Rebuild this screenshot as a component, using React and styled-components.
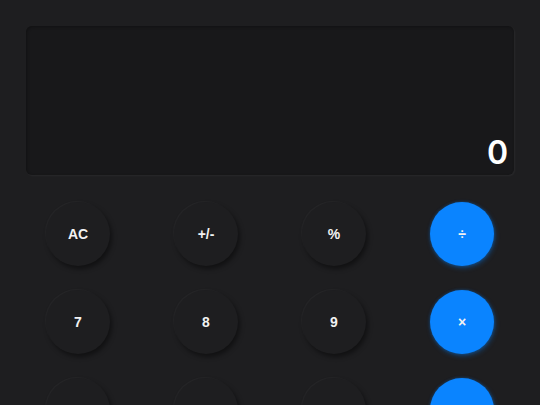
import React from "react";
import styled, { createGlobalStyle } from "styled-components";

const Global = createGlobalStyle`
  html, body { margin: 0; padding: 0; background: #1e1e20; overflow: hidden; }
  body { font-family: "Liberation Sans", Arial, sans-serif; }
`;

const Calculator = styled.div`
  padding: 26px 26px 0 26px;
  display: flex;
  flex-direction: column;
  gap: 27px;
  width: 488px;
`;

const Display = styled.div`
  height: 149px;
  background: #18181a;
  border-radius: 6px;
  box-shadow: 1px 1px 2px rgba(255, 255, 255, 0.05), inset 1px 1px 3px rgba(0, 0, 0, 0.3);
  display: flex;
  align-items: flex-end;
  justify-content: flex-end;
  padding: 0 6px 6px 0;
  box-sizing: border-box;
`;

const Value = styled.div`
  color: #ffffff;
  font-family: Inter, "Open Sans", sans-serif;
  font-weight: 600;
  font-size: 32px;
  line-height: 1;
`;

const Keys = styled.div`
  display: grid;
  grid-template-columns: repeat(4, 1fr);
  column-gap: 24px;
  row-gap: 24px;
  justify-items: center;
`;

const Key = styled.button`
  width: 64px;
  height: 64px;
  border-radius: 50%;
  border: none;
  padding: 0;
  font-family: "Liberation Sans", Arial, sans-serif;
  font-weight: bold;
  font-size: 14px;
  color: #f2f2f2;
  background: ${(p) => (p.$op ? "#0a84ff" : "#1e1e20")};
  box-shadow: ${(p) =>
    p.$op
      ? "1px 2px 5px rgba(10, 132, 255, 0.35), 0 0 3px rgba(10,132,255,0.35)"
      : "2px 3px 5px rgba(0, 0, 0, 0.45), -1px -1px 1px rgba(255, 255, 255, 0.035)"};
  display: flex;
  align-items: center;
  justify-content: center;
`;

const keys = [
  ["AC"], ["+/-"], ["%"], ["÷", true],
  ["7"], ["8"], ["9"], ["×", true],
  ["4"], ["5"], ["6"], ["−", true],
];

export default function App() {
  return (
    <>
      <Global />
      <Calculator>
        <Display>
          <Value>0</Value>
        </Display>
        <Keys>
          {keys.map(([label, op], i) => (
            <Key key={i} $op={op}>{label}</Key>
          ))}
        </Keys>
      </Calculator>
    </>
  );
}
